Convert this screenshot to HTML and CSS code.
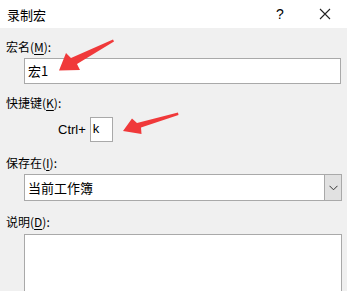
FILE: index.html
```html
<!DOCTYPE html>
<html>
<head>
<meta charset="utf-8">
<link rel="stylesheet" href="styles.css">
</head>
<body>
<div class="dialog">
  <div class="titlebar">
    <span class="title">录制宏</span>
    <span class="tb-help">?</span>
    <span class="tb-close"><svg width="12" height="12" viewBox="0 0 12 12"><path d="M1 1L11 11M11 1L1 11" stroke="#222" stroke-width="1.1" fill="none"/></svg></span>
  </div>
  <div class="content">
    <div class="label l1">宏名(<u>M</u>):</div>
    <div class="field f1">宏1</div>
    <div class="label l2">快捷键(<u>K</u>):</div>
    <div class="ctrl-row">
      <span class="ctrl">Ctrl+</span>
      <span class="keybox">k</span>
    </div>
    <div class="label l3">保存在(<u>I</u>):</div>
    <div class="select">
      <span class="sel-text">当前工作簿</span>
      <span class="sel-btn"><svg width="9" height="6" viewBox="0 0 9 6"><path d="M0.5 0.8L4.5 4.8L8.5 0.8" stroke="#333" stroke-width="1" fill="none"/></svg></span>
    </div>
    <div class="label l4">说明(<u>D</u>):</div>
    <div class="textarea"></div>
  </div>
  <svg class="arrows" width="347" height="291" viewBox="0 0 347 291">
    <path d="M113 39.5 L114 41.5 L77 64 L80 70 L59 70.5 L66 53 L71 58 Z" fill="#f0393a"/>
    <path d="M178 112.5 L178.5 115 L141 127.5 L141.5 134 L123 131 L132 118.5 L137 123 Z" fill="#f0393a"/>
  </svg>
</div>
</body>
</html>
```
FILE: styles.css
```css
html, body {
  margin: 0;
  padding: 0;
  background: #f0f0f0;
}
.dialog {
  position: relative;
  width: 347px;
  height: 291px;
  overflow: hidden;
  font-family: "Noto Sans CJK SC", "Noto Sans", sans-serif;
  color: #000;
  background: #f0f0f0;
}
.titlebar {
  height: 28px;
  background: #fff;
  display: flex;
  align-items: center;
}
.title {
  font-size: 13px;
  margin-left: 7px;
  flex: 1;
}
.tb-help {
  font-family: "Liberation Sans", sans-serif;
  font-size: 14px;
  width: 12px;
  text-align: center;
  margin-right: 33px;
}
.tb-close {
  width: 12px;
  height: 12px;
  margin-right: 16px;
  display: flex;
}
.content {
  display: flex;
  flex-direction: column;
  padding-left: 6px;
}
.label {
  font-size: 12px;
  line-height: 16px;
  height: 16px;
}
.label u {
  text-underline-offset: 2px;
}
.l1 { margin-top: 11px; }
.l2 { margin-top: 11px; }
.l3 { margin-top: 13px; }
.l4 { margin-top: 13px; }
.field {
  margin-top: 3px;
  margin-left: 18px;
  height: 24px;
  border: 1px solid #a9a9a9;
  background: #fff;
  font-size: 13px;
  line-height: 24px;
  padding-left: 3px;
  box-sizing: content-box;
}
.field.f1 { width: 312px; }
.ctrl-row {
  margin-top: 6px;
  margin-left: 52px;
  display: flex;
  align-items: center;
  height: 25px;
}
.ctrl {
  font-family: "Liberation Sans", sans-serif;
  font-size: 13px;
  margin-right: 4px;
}
.keybox {
  height: 23px;
  border: 1px solid #a9a9a9;
  background: #fff;
  font-family: "Liberation Sans", sans-serif;
  font-size: 13px;
  line-height: 21px;
  padding-left: 2px;
  box-sizing: content-box;
  width: 19px;
}
.select {
  margin-top: 3px;
  margin-left: 18px;
  width: 316px;
  height: 25px;
  border: 1px solid #a9a9a9;
  background: #fff;
  display: flex;
  align-items: stretch;
}
.sel-text {
  flex: 1;
  font-size: 13px;
  line-height: 25px;
  padding-left: 3px;
}
.sel-btn {
  width: 16px;
  background: #e1e1e1;
  border-left: 1px solid #a9a9a9;
  display: flex;
  align-items: center;
  justify-content: center;
}
.textarea {
  margin-top: 4px;
  margin-left: 18px;
  width: 316px;
  height: 80px;
  border: 1px solid #a9a9a9;
  background: #fff;
}
.arrows {
  position: absolute;
  left: 0;
  top: 0;
  pointer-events: none;
}
```
